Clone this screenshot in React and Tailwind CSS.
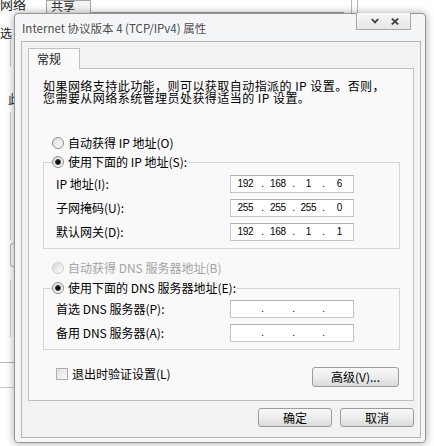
import React from "react";

// Windows 7 style "Internet 协议版本 4 (TCP/IPv4) 属性" dialog over the network properties window

function Radio({ checked, disabled }) {
  return (
    <span
      className={
        "flex h-[12px] w-[12px] shrink-0 items-center justify-center rounded-full border bg-linear-to-br from-[#d9d9d9] to-[#ffffff] " +
        (disabled ? "border-[#cdcdcd]" : "border-[#8d8d8d]")
      }
    >
      {checked && <span className="h-[6px] w-[6px] rounded-full border border-[#3a3a3a] bg-[#0d0d0d]" />}
    </span>
  );
}

function IpField({ parts = ["", "", "", ""] }) {
  const [a, b, c, d] = parts;
  return (
    <div className="flex h-[18px] w-[124px] items-center border border-[#c2c6cb] border-t-[#adb1b6] bg-white font-['Liberation_Sans',sans-serif] text-[10px] leading-[12px] tracking-[-0.3px] text-black">
      <span className="w-[29px] text-center">{a}</span>
      <span className="w-[5px] text-center">.</span>
      <span className="w-[26px] text-center">{b}</span>
      <span className="w-[5px] text-center">.</span>
      <span className="w-[25px] text-center">{c}</span>
      <span className="w-[5px] text-center">.</span>
      <span className="flex-1 text-center">{d}</span>
    </div>
  );
}

function FieldRow({ label, parts }) {
  return (
    <div className="flex h-[18px] items-center">
      <span className="w-[174px] leading-[14px]">{label}</span>
      <IpField parts={parts} />
    </div>
  );
}

function Button({ children, className = "" }) {
  return (
    <button
      className={
        "flex h-[19px] items-center justify-center rounded-[3px] border border-[#9c9c9c] bg-linear-to-b from-[#f9f9f9] via-[#ededed] to-[#dadada] leading-[14px] text-black " +
        className
      }
    >
      {children}
    </button>
  );
}

function BackgroundWindow() {
  return (
    <div className="flex h-full flex-col">
      <div className="flex h-[13px] shrink-0">
        <div className="h-[13px] w-[46px] overflow-hidden">
          <div className="-mt-[5px] text-[13px] leading-[17px] text-[#1e1e1e]">网络</div>
        </div>
        <div className="h-[13px] w-[45px] overflow-hidden border border-b-0 border-[#a5a5a5] bg-[#f4f4f4]">
          <div className="-mt-[3px] pl-[4px] text-[12px] leading-[16px] text-[#333]">共享</div>
        </div>
        <div className="w-[253px] border-b border-[#a5a5a5]" />
        <div className="w-[7px]" />
        <div className="w-[7px] border-x border-[#b8b8b8]" />
      </div>
      <div className="flex w-[14px] flex-col">
        <div className="mt-[14px] h-[12px] text-[12px] leading-[12px] text-[#222]">选</div>
        <div className="mt-[1px] ml-[10px] h-[27px] border-l border-[#c6c6c6]" />
        <div className="mt-[26px] h-[12px] pl-[8px] text-[12px] leading-[12px] text-[#222]">此</div>
        <div className="mt-[7px] ml-[10px] h-[128px] border-l border-[#cdcdcd]" />
        <div className="mt-[3px] ml-[10px] h-[24px] rounded-l-[3px] border border-r-0 border-[#b9b9b9]" />
        <div className="mt-[13px] ml-[10px] h-[57px] border-l border-[#cdcdcd]" />
        <div className="mt-[25px] border-t border-[#b9b9b9]" />
        <div className="mt-[24px] border-t border-[#c9c9c9]" />
      </div>
    </div>
  );
}

export default function App() {
  return (
    <div className="relative h-[446px] w-[434px] overflow-hidden bg-white font-['Noto_Sans_CJK_SC',sans-serif] text-[12px] text-black">
      <BackgroundWindow />

      {/* dialog window */}
      <div className="absolute top-[13px] left-[14px] flex h-[430px] w-[412px] flex-col rounded-[4px] border border-[#969696] bg-[#f3f5f7] shadow-[0_0_8px_rgba(0,0,0,0.35)]">
        <div className="flex h-[27px] shrink-0 items-center pl-[7px]">
          <span className="text-[11.5px] leading-[14px] text-[#4a4a4a] [text-shadow:0_0_5px_#fff,0_0_3px_#fff]">
            Internet 协议版本 4 (TCP/IPv4) 属性
          </span>
          <div className="-mt-px mr-[14px] ml-auto flex h-[17px] w-[55px] items-center self-start border border-t-0 border-[#a9a9a9] bg-linear-to-b from-[#f7f7f7] to-[#e6e6e6] pl-[14px]">
            <svg width="8" height="6" viewBox="0 0 8 6">
              <path d="M0.8 1 L4 4.4 L7.2 1" fill="none" stroke="#3b3b3b" strokeWidth="1.8" />
            </svg>
            <svg className="ml-[12px]" width="8" height="7" viewBox="0 0 8 7">
              <path d="M0.8 0.6 L7.2 6.4 M7.2 0.6 L0.8 6.4" fill="none" stroke="#3b3b3b" strokeWidth="1.8" />
            </svg>
          </div>
        </div>

        {/* client area */}
        <div className="mr-[4px] ml-[6px] flex h-[397px] w-[400px] flex-col border border-[#b3b6ba] bg-[#f2f2f2] px-[6px] pt-[6px]">
          <div className="flex h-[20px] shrink-0">
            <div className="relative z-10 -mb-px flex h-[21px] w-[52px] items-center border border-b-0 border-[#bcc0c4] bg-[#fafafa] pl-[8px] leading-[14px] text-[#1a1a1a]">
              常规
            </div>
          </div>

          {/* tab page */}
          <div className="flex h-[333px] flex-col border border-[#bcc0c4] bg-[#f9f9f9] pt-[11px] pr-[13px] pl-[14px]">
            <p className="whitespace-nowrap leading-[12px] tracking-[0.45px]">
              如果网络支持此功能，则可以获取自动指派的 IP 设置。否则，
              <br />
              您需要从网络系统管理员处获得适当的 IP 设置。
            </p>

            <div className="mt-[32px] ml-[9px] flex h-[14px] items-center gap-[4px]">
              <Radio />
              <span className="leading-[14px]">自动获得 IP 地址(O)</span>
            </div>

            <fieldset className="mt-[5px] border border-[#d2d6da]">
              <legend className="ml-[8px] flex h-[14px] items-center gap-[4px]">
                <Radio checked />
                <span className="leading-[14px]">使用下面的 IP 地址(S):</span>
              </legend>
              <div className="flex flex-col gap-[6px] pt-[6px] pb-[7px] pl-[12px]">
                <FieldRow label="IP 地址(I):" parts={["192", "168", "1", "6"]} />
                <FieldRow label="子网掩码(U):" parts={["255", "255", "255", "0"]} />
                <FieldRow label="默认网关(D):" parts={["192", "168", "1", "1"]} />
              </div>
            </fieldset>

            <div className="mt-[12px] ml-[9px] flex h-[14px] items-center gap-[4px]">
              <Radio disabled />
              <span className="leading-[14px] text-[#a3a3a3]">自动获得 DNS 服务器地址(B)</span>
            </div>

            <fieldset className="mt-[6px] border border-[#d2d6da]">
              <legend className="ml-[8px] flex h-[14px] items-center gap-[4px]">
                <Radio checked />
                <span className="leading-[14px]">使用下面的 DNS 服务器地址(E):</span>
              </legend>
              <div className="flex flex-col gap-[6px] pt-[5px] pb-[7px] pl-[12px]">
                <FieldRow label="首选 DNS 服务器(P):" />
                <FieldRow label="备用 DNS 服务器(A):" />
              </div>
            </fieldset>

            <div className="mt-[17px] flex items-start justify-between pr-[1px]">
              <div className="ml-[13px] flex h-[14px] items-center gap-[4px]">
                <span className="h-[12px] w-[12px] border border-[#adadad] bg-linear-to-br from-[#dedede] to-[#fbfbfb]" />
                <span className="leading-[14px]">退出时验证设置(L)</span>
              </div>
              <Button className="h-[20px] w-[87px]">高级(V)...</Button>
            </div>
          </div>

          <div className="mt-[7px] flex justify-end gap-[8px]">
            <Button className="w-[74px]">确定</Button>
            <Button className="w-[74px]">取消</Button>
          </div>
        </div>
      </div>
    </div>
  );
}
